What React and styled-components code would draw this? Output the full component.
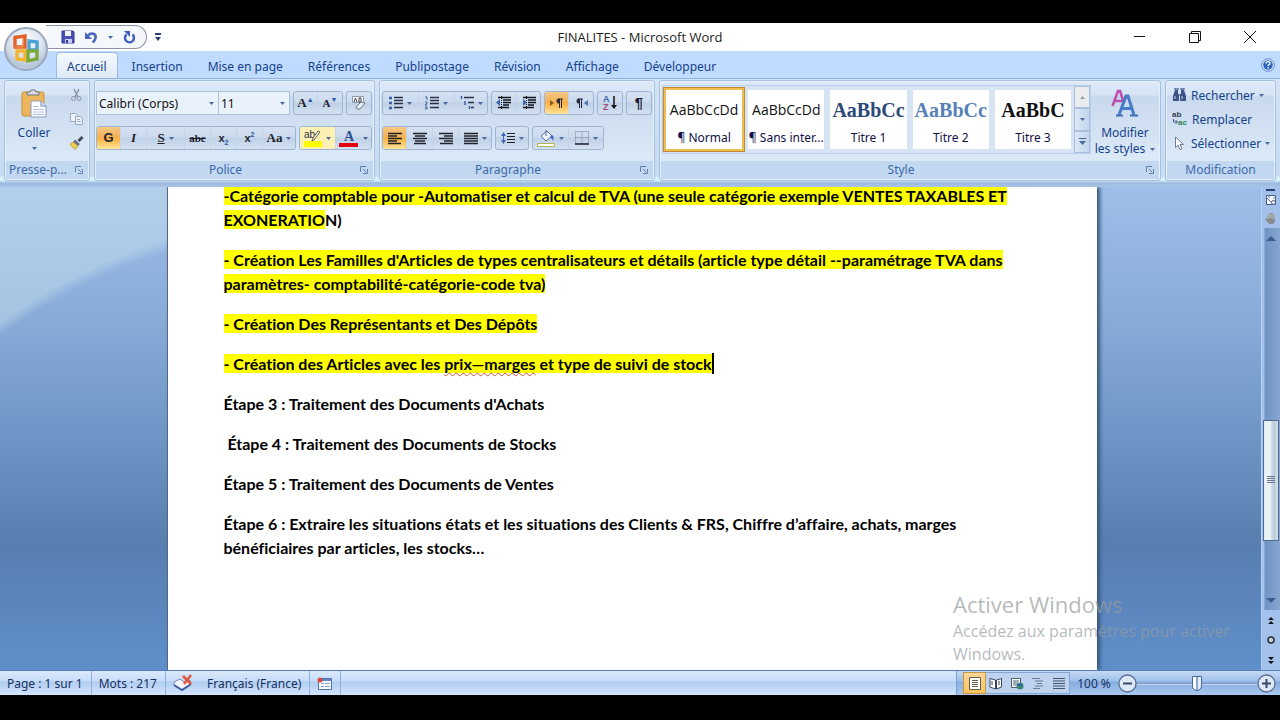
import React from 'react';
import styled, { createGlobalStyle, css } from 'styled-components';

const GlobalStyle = createGlobalStyle`
    * {
        box-sizing: border-box;
    }

    body {
        margin: 0;
        background: #000;
        font-family: "Noto Sans", "Open Sans", sans-serif;
        font-size: 12px;
        color: #15428b;
    }

    button, select, input {
        margin: 0;
        padding: 0;
        border: 0;
        background: none;
        font: inherit;
        color: inherit;
    }

    svg {
        display: block;
        flex: none;
    }
`;

// Window frame
const Window = styled.div`
    display: flex;
    flex-direction: column;
    height: 100vh;
    min-height: 480px;
    padding: 23px 0 25px;
    background: #000;
`;

const Header = styled.header`
    position: relative;
    background: #bfdbff;
`;

const TitleBar = styled.div`
    display: grid;
    grid-template-columns: 1fr auto 1fr;
    align-items: center;
    height: 28px;
    background: #fff;
`;

const Title = styled.h1`
    margin: 0;
    font-family: "Open Sans", sans-serif;
    font-size: 13px;
    font-weight: 400;
    color: #222;
`;

const OfficeButton = styled.button`
    position: absolute;
    left: 4px;
    top: 4px;
    width: 44px;
    height: 44px;
    display: grid;
    place-items: center;
    border: 2px solid #9aa8bd;
    border-radius: 50%;
    background: radial-gradient(circle at 50% 30%, #fff 0, #dde5f0 45%, #b6c5db 75%, #eef4fc 100%);
`;

const QuickAccess = styled.div`
    display: flex;
    align-items: center;
    gap: 8px;
`;

const QuickPill = styled.div`
    display: flex;
    align-items: center;
    gap: 10px;
    width: 101px;
    height: 24px;
    margin-left: 46px;
    padding-left: 15px;
    border: 1px solid #8a93a3;
    border-left: 0;
    border-radius: 0 12px 12px 0;
    background: #f4f7fc;
`;

const PlainButton = styled.button`
    display: grid;
    place-items: center;
`;

const WindowButtons = styled.div`
    display: flex;
    justify-content: flex-end;
    padding-right: 3px;
`;

const WindowButton = styled(PlainButton)`
    width: 55px;
    height: 26px;
`;

const Tabs = styled.nav`
    display: flex;
    align-items: flex-end;
    gap: 3px;
    height: 28px;
    padding: 0 5px 0 56px;
    border-bottom: 1px solid #8db2e3;
`;

const Tab = styled.button`
    height: 26px;
    padding: 2px 10px 0;
    border: 1px solid transparent;
    border-bottom: 0;
    border-radius: 4px 4px 0 0;
    white-space: nowrap;

    ${({ $active }) => $active && css`
        border-color: #9abce8;
        background: linear-gradient(#f4f9ff, #dfeaf7);
    `}
`;

const HelpButton = styled(PlainButton)`
    align-self: center;
    margin-left: auto;
`;

// Ribbon
const RibbonBar = styled.div`
    display: flex;
    gap: 4px;
    height: 108px;
    padding: 1px 4px 6px;
    background: linear-gradient(#d4e4f7 0, #c6daf1 95px, #d9fbff 101px, #9db9df 104px, #a9c4e8 108px);
`;

const GroupBox = styled.section`
    display: flex;
    flex-direction: column;
    flex: ${({ $grow }) => ($grow ? '1 1 0' : 'none')};
    min-width: 0;
    border: 1px solid #a5c0e0;
    border-radius: 3px;
    background: linear-gradient(#dfeafa 0, #d5e3f3 14px, #c9d9ed 15px, #dceaf8 82px);
    box-shadow: inset 0 0 0 1px #e6f0fb;
`;

const GroupBody = styled.div`
    flex: 1;
    display: flex;
    flex-direction: ${({ $column }) => ($column ? 'column' : 'row')};
    gap: ${({ $gap }) => $gap || 0}px;
    padding: ${({ $padding }) => $padding || '0'};
    min-height: 0;
`;

const GroupFooter = styled.div`
    display: flex;
    align-items: center;
    height: 18px;
    margin: 0 1px 1px;
    background: #c1d8f0;
`;

const GroupName = styled.h2`
    flex: 1;
    margin: 0;
    font-size: 12px;
    font-weight: 400;
    line-height: 18px;
    text-align: center;
    white-space: nowrap;
    color: #3e6aaa;
`;

const Launcher = styled(PlainButton)`
    width: 18px;
    height: 18px;
`;

const Row = styled.div`
    display: flex;
    gap: ${({ $gap }) => $gap || 0}px;
    min-width: 0;
`;

const ButtonSet = styled.div`
    display: flex;
    height: 24px;
    border: 1px solid #9db5d5;
    border-radius: 3px;
    background: linear-gradient(#d6e2f2 0, #cbdaee 10px, #bfd0e7 11px, #d3e1f1 22px);
    overflow: hidden;
`;

const Tool = styled.button`
    display: flex;
    align-items: center;
    justify-content: center;
    gap: 4px;
    width: ${({ $w }) => $w || 26}px;
    border-right: 1px solid #c3d3e8;
    color: #1e1e2c;

    &:last-child {
        border-right: 0;
    }

    ${({ $on }) => $on && css`
        background: linear-gradient(#f7c884 0, #f5b157 10px, #fbb040 11px, #fee59a 22px);
    `}
`;

const Glyph = styled.span`
    font-family: ${({ $sans }) => ($sans ? '"Liberation Sans", sans-serif' : '"Liberation Serif", serif')};
    font-size: ${({ $size }) => $size || 13}px;
    font-weight: 700;
    font-style: ${({ $italic }) => ($italic ? 'italic' : 'normal')};
    text-decoration: ${({ $line }) => $line || 'none'};
    line-height: 16px;

    sup, sub {
        font-size: 7px;
        line-height: 0;
        color: #2a55a8;
    }
`;

const Combo = styled.div`
    display: grid;
    align-items: center;
    width: ${({ $w }) => $w}px;
    height: 24px;
    border: 1px solid #a9c0dd;
    background: #e9f1fb;

    & + & {
        border-left: 0;
    }

    > * {
        grid-area: 1 / 1;
    }

    svg {
        justify-self: end;
        margin-right: 4px;
        pointer-events: none;
    }
`;

const Select = styled.select`
    appearance: none;
    width: 100%;
    height: 22px;
    padding: 0 2px;
    color: #111;
`;

const PasteButton = styled.button`
    display: flex;
    flex-direction: column;
    align-items: center;
    justify-content: flex-start;
    width: 58px;
    padding-top: 8px;
    gap: 6px;
`;

const ClipTools = styled.div`
    display: flex;
    flex-direction: column;
    align-items: center;
    gap: 10px;
    padding-top: 7px;
    flex: 1;
`;

const Gallery = styled.div`
    display: flex;
    flex: 1;
    height: 69px;
    min-width: 0;
    border: 1px solid #b9d0ec;
    background: #d6e4f4;
`;

const Styles = styled.div`
    display: flex;
    flex: 1;
    min-width: 0;
    padding-top: 1px;
    overflow: hidden;
`;

const StyleCell = styled.button`
    flex: 1 1 0;
    display: flex;
    flex-direction: column;
    justify-content: space-between;
    min-width: 0;
    height: 65px;
    padding: 4px 0 3px;
    border: 3px solid ${({ $on }) => ($on ? '#f0bd50' : '#d6e4f4')};
    background: #fff;
    color: #10104a;
    ${({ $on }) => $on && 'outline: 1px solid #c28a30; outline-offset: -1px;'}

    span {
        width: 100%;
        text-align: center;
        white-space: nowrap;
    }
`;

const Sample = styled.span`
    height: 32px;
    font-family: ${({ $serif }) => ($serif ? '"Liberation Serif", serif' : '"Open Sans", sans-serif')};
    font-size: ${({ $serif }) => ($serif ? 20 : 14)}px;
    font-weight: ${({ $serif }) => ($serif ? 700 : 400)};
    line-height: 32px;
    color: ${({ $color }) => $color || '#111'};
`;

const GalleryScroll = styled.div`
    display: flex;
    flex-direction: column;
    width: 16px;

    button {
        flex: 1;
        border: 1px solid #a9c0dd;
        background: linear-gradient(90deg, #dce8f6, #c3d5ec);
    }

    button:first-child {
        background: #eaecee;
    }
`;

const ChangeStyles = styled.button`
    display: flex;
    flex-direction: column;
    align-items: center;
    justify-content: flex-start;
    gap: 8px;
    width: 68px;
    padding-top: 4px;
    line-height: 16px;
    white-space: nowrap;
`;

const InlineLabel = styled.span`
    display: inline-flex;
    align-items: center;
    gap: 5px;
`;

const EditButton = styled.button`
    display: flex;
    align-items: center;
    gap: 4px;
    height: 24px;
    white-space: nowrap;
`;

// Document area
const Workspace = styled.main`
    flex: 1;
    display: flex;
    min-height: 0;
    background:
        radial-gradient(circle at 330px 590px, transparent 550px, rgba(196, 222, 238, .5) 562px) 0 0 / 168px 200px no-repeat,
        linear-gradient(#9fbfe8 0, #86a9d6 30%, #6d95c5 52%, #587eb0 74%, #5f8fca 100%);
`;

const Desk = styled.div`
    position: relative;
    flex: 1;
    display: flex;
    justify-content: center;
    min-width: 0;
    padding-left: 2px;
    overflow: hidden;
`;

const Paper = styled.article`
    width: 100%;
    max-width: 930px;
    padding: 0 56px;
    background: #fff;
    border-left: 1px solid #55687f;
    box-shadow: 3px 0 4px #34567f;
    font-family: Lato, sans-serif;
    font-size: 16px;
    font-weight: 700;
    font-variant-ligatures: none;
    line-height: 24px;
    color: #000;
    overflow: hidden;

    p {
        margin: 0 0 16px;
    }

    p:first-child {
        margin-top: -3px;
    }
`;

const Mark = styled.mark`
    background: #ff0;
    color: inherit;
`;

const Misspelt = styled.span`
    text-decoration: underline wavy #d0502a 1px;
    text-underline-offset: 2px;
    text-decoration-skip-ink: none;
`;

const Caret = styled.span`
    border-left: 2px solid #000;
    padding: 1px 0;
`;

const Activation = styled.aside`
    position: absolute;
    right: 24px;
    bottom: 4px;
    width: 284px;
    color: rgba(150, 155, 160, .7);
    font-family: "Open Sans", sans-serif;
    font-size: 16px;
    line-height: 23px;
    pointer-events: none;

    strong {
        display: block;
        font-size: 22px;
        font-weight: 400;
        line-height: 32px;
    }
`;

const ScrollColumn = styled.div`
    display: flex;
    flex-direction: column;
    align-items: stretch;
    width: 19px;
    border-left: 1px solid #b5d2f7;
    background: #a3c1ea;
`;

const ScrollTrack = styled.div`
    flex: 1;
    display: flex;
    flex-direction: column;
    padding: 0 1px;
    background: linear-gradient(90deg, #a3c1ea 2px, #6f93c3 3px, #87a6d0);
`;

const ScrollButton = styled(PlainButton)`
    height: ${({ $h }) => $h || 20}px;
`;

const Spacer = styled.div`
    flex: ${({ $flex }) => $flex};
`;

const Thumb = styled.div`
    flex: 120;
    display: grid;
    place-items: center;
    border: 1px solid #52698d;
    background: linear-gradient(90deg, #e6eef5 0, #eef4f8 40%, #b8c9db 70%, #d5e0ea 100%);
`;

// Status bar
const StatusBar = styled.footer`
    display: flex;
    height: 25px;
    border-top: 1px solid #567db1;
    background: linear-gradient(#dbe9fb 0, #c7dcf7 10px, #b0cdf2 11px, #d3e5fb 24px);
    white-space: nowrap;
`;

const StatusItem = styled.div`
    display: flex;
    align-items: center;
    gap: 14px;
    padding: 0 8px 0 7px;
    border-right: 1px solid #8fb0dc;
    color: #17305f;
`;

const StatusRight = styled.div`
    display: flex;
    align-items: center;
    flex: none;
    width: 324px;
    margin-left: auto;
    padding: 0 4px 0 6px;
    border-left: 1px solid #7c9fd0;
    background: linear-gradient(#c5daf5 0, #a0c0ea 10px, #86ade0 11px, #aac8ef 24px);
    color: #17305f;
`;

const ViewSet = styled.div`
    display: flex;
    height: 22px;
    border: 1px solid #85a5d2;
    background: #bdd3ef;
`;

const ViewButton = styled(PlainButton)`
    width: 21px;
    ${({ $on }) => $on && 'background: linear-gradient(#fbd79a, #fdc25c); outline: 1px solid #c59847;'}
`;

const ZoomValue = styled.button`
    width: 48px;
`;

const ZoomRange = styled.input`
    appearance: none;
    flex: 1;
    min-width: 0;
    height: 18px;
    background: linear-gradient(#5d80b4, #e5f0fd) 0 9px / 100% 2px no-repeat;

    &::-webkit-slider-thumb {
        appearance: none;
        width: 10px;
        height: 15px;
        border: 1px solid #47669a;
        border-radius: 1px 1px 5px 5px;
        background: linear-gradient(90deg, #fff 3px, #8aa5cd 3px, #8aa5cd 5px, #e3edfa 5px);
    }
`;

const Arrow = ({ color = '#4b6a9b' }) => (
    <svg width="5" height="3" viewBox="0 0 5 3"><path d="M0 0h5L2.500 3z" fill={color} /></svg>
);

const Icon = ({ w = 16, h = 16, children, ...rest }) => (
    <svg width={w} height={h} viewBox={`0 0 ${w} ${h}`} fill="none" {...rest}>{children}</svg>
);

const OfficeLogo = () => (
    <Icon w={30} h={30} strokeWidth="3.4">
        <path d="M4 3.500 14 2v11H4z" stroke="#e2622b" />
        <path d="m18 7 8 1v8h-8z" stroke="#49a3d8" />
        <path d="M6 17h8v9l-8-1z" stroke="#f4b531" />
        <path d="M17 17h9v8l-9 2z" stroke="#79a83b" />
        <path d="M12 4v9H4" stroke="#f08a4a" strokeWidth="1.400" />
    </Icon>
);

const SaveIcon = () => (
    <Icon w={14} h={14}>
        <path d="M1 1h11l1 1v11H1z" fill="#4a50b4" stroke="#303690" />
        <path d="M4 1h6v5H4z" fill="#eef1fb" />
        <path d="M4 9h7v4H4z" fill="#c9cff0" />
        <path d="M5 10h2v3H5z" fill="#303690" />
    </Icon>
);

const UndoIcon = () => (
    <Icon w={13} h={13}>
        <path d="M3 4.500C6 1 11.500 2.500 10.500 7c-.3 2-1.500 3.500-3 4.500" stroke="#4c66c0" strokeWidth="2.600" />
        <path d="M0 1v7h7z" fill="#4c66c0" />
    </Icon>
);

const RedoIcon = () => (
    <Icon w={13} h={13}>
        <path d="M9.500 3.500a4.500 4.500 0 1 1-6 0" stroke="#3f5fbd" strokeWidth="2.400" />
        <path d="M1 0h6v6z" fill="#3f5fbd" />
    </Icon>
);

const PasteIcon = () => (
    <Icon w={26} h={29}>
        <rect x="1" y="3" width="22" height="24" rx="2" fill="#edb65c" stroke="#c78e3a" />
        <path d="M6 6V3h3l1-2h4l1 2h3v3z" fill="#d8dce3" stroke="#6d7480" />
        <path d="M10 12h10l5 5v11H10z" fill="#fff" stroke="#8a9cc0" />
        <path d="M20 12v5h5" fill="#dfe6f5" stroke="#6f86b8" />
        <path d="M12 17.500h6m-6 3h11m-11 2.500h11m-11 2.500h11" stroke="#b4bfe0" />
    </Icon>
);

const CutIcon = () => (
    <Icon w={13} h={14} stroke="#8995aa">
        <path d="M4 1l4 8M9 1 5 9" strokeWidth="1.500" />
        <circle cx="3.500" cy="10.500" r="2" /><circle cx="9" cy="10.500" r="2" />
    </Icon>
);

const CopyIcon = () => (
    <Icon w={15} h={14} stroke="#9aa9c2">
        <path d="M1.500 1.500h5l2 2v6h-7z" fill="#edf2f8" />
        <path d="M6.500 4.500h5l2 2v6h-7z" fill="#edf2f8" />
        <path d="M8 7.500h3m-3 2h4" />
    </Icon>
);

const BrushIcon = () => (
    <Icon w={15} h={14}>
        <path d="m13.500 1-4 4" stroke="#434a58" strokeWidth="3" />
        <path d="M6 3.500 11 8l-2 2-5-4z" fill="#65718a" />
        <path d="M4 6 9 10l-3 3.500L1 8.500z" fill="#f1cf50" stroke="#b58c25" strokeWidth=".7" />
    </Icon>
);

const LauncherIcon = () => (
    <Icon w={8} h={8} stroke="#6380ad">
        <path d="M.5 6V.5H6M3 3l3 3" /><path d="M7.500 3v4.500H3" />
    </Icon>
);

const EraseIcon = () => (
    <Icon w={16} h={16}>
        <path d="M1.500 1.500h11v6h-11z" fill="#fff" stroke="#8d99ac" />
        <path d="m3 7 1.500-4L6 7M8 3v4h2V3z" stroke="#353b48" />
        <path d="m5 12 5-5 4 1-5 6H6z" fill="#eef1f6" stroke="#6b7689" />
    </Icon>
);

const HighlightIcon = () => (
    <Icon w={18} h={18}>
        <path d="M0 12h18v6H0z" fill="#ff0" />
        <text x="0" y="9" fontSize="10" fontFamily="Liberation Sans, sans-serif" fill="#26304a">ab</text>
        <path d="m16 3-6 8-2 1 1-3 5-7z" fill="#f3f1dc" stroke="#6b6d50" />
    </Icon>
);

const FontColorIcon = () => (
    <Icon w={20} h={18}>
        <text x="5" y="12" fontSize="14" fontWeight="700" fontFamily="Liberation Serif, serif" fill="#2c4e96">A</text>
        <path d="M0 14h19v4H0z" fill="#e3000f" />
    </Icon>
);

const ListIcon = ({ kind }) => (
    <Icon w={14} h={14}>
        {kind === 'bullet' && <path d="M0 2h3M0 7h3M0 12h3" stroke="#3c5ea6" strokeWidth="2.500" />}
        {kind === 'number' && <path d="M0 1h2v3M0 6h2v1L0 9h2m-2 2h2v2H0" stroke="#3c5ea6" />}
        {kind === 'multi' && <path d="M1.500 0v3M5 5v4M9.500 10v3" stroke="#3c5ea6" strokeWidth="1.500" />}
        <path
            d={kind === 'multi' ? 'M4 1.500h10M8 6.500h6M11 11.500h3' : 'M5 1.500h9M5 4.500h9M5 7.500h9M5 11.500h9'}
            stroke="#2a3345"
            strokeWidth="1.300"
        />
    </Icon>
);

const IndentIcon = ({ right }) => (
    <Icon w={15} h={14}>
        <path d="M2 1.500h13M7 4h8M7 6.500h8M7 9h6M2 11.500h11" stroke="#10151f" strokeWidth="1.500" />
        <path d={right ? 'M6 6.500 2 3v7z' : 'M0 6.500 4 3v7z'} fill="#3f62ae" />
        <path d="M5.500 0v14" stroke="#111" strokeDasharray="1 1" />
    </Icon>
);

const DirectionIcon = ({ rtl }) => (
    <Icon w={13} h={12}>
        <path d={rtl ? 'M13 3v6L9 6z' : 'M0 3v6l4-3z'} fill={rtl ? '#4c6fb5' : '#8b5a28'} />
        <g transform={rtl ? 'translate(0)' : 'translate(5)'}>
            <path d="M4.500 11V2M6.500 11V2M8 2H3" stroke="#222a3b" />
            <path d="M4 1.500a2.500 2.500 0 1 0 0 5z" fill="#222a3b" />
        </g>
    </Icon>
);

const SortIcon = () => (
    <Icon w={15} h={18}>
        <text x="0" y="8" fontSize="9" fontWeight="700" fontFamily="Liberation Sans, sans-serif" fill="#3b68b8">A</text>
        <text x="0" y="16" fontSize="9" fontWeight="700" fontFamily="Liberation Sans, sans-serif" fill="#a14874">Z</text>
        <path d="M11 2v11" stroke="#111" strokeWidth="1.500" /><path d="M8 11h6l-3 4z" fill="#111" />
    </Icon>
);

const alignPaths = {
    left: 'M0 1.500h14M0 4h9M0 6.500h14M0 9h9M0 11.500h13',
    center: 'M0 1.500h14M2 4h10M0 6.500h14M2 9h10M1 11.500h12',
    right: 'M0 1.500h14M5 4h9M0 6.500h14M5 9h9M1 11.500h13',
    justify: 'M0 1.500h14M0 4h14M0 6.500h14M0 9h14M0 11.500h14',
};

const AlignIcon = ({ kind }) => (
    <Icon w={14} h={13}><path d={alignPaths[kind]} stroke="#20222a" strokeWidth="1.500" /></Icon>
);

const SpacingIcon = () => (
    <Icon w={14} h={14}>
        <path d="M0 5h5L2.500 1zM0 9h5l-2.500 4z" fill="#4064ad" /><path d="M2.500 4v6" stroke="#4064ad" />
        <path d="M6 2.500h8M6 5.500h8M6 8.500h8M6 11.500h8" stroke="#20222a" />
    </Icon>
);

const FillIcon = () => (
    <Icon w={18} h={18}>
        <path d="m4 7 6-5 5 5-6 5z" fill="#edf2fb" stroke="#5a6e96" /><path d="M9 1v6" stroke="#5a6e96" />
        <path d="M14 6c3 0 3 3 2 6-1-3-2-3-3-3z" fill="#3f67b6" />
        <path d="M.5 14.500h17v3H.5z" fill="#fffef0" stroke="#b5b25c" />
    </Icon>
);

const BorderIcon = () => (
    <Icon w={14} h={14}>
        <path d="M.5.5h13v12H.5zM7 .5v12M.5 6.500h13" stroke="#76839a" strokeDasharray="1 1" />
        <path d="M0 13h14" stroke="#20222a" strokeWidth="1.500" />
    </Icon>
);

const StylesIcon = () => (
    <Icon w={28} h={28}>
        <path d="M1.500 17 7 2h2l4 12M4 12h7" stroke="#ba4fb0" strokeWidth="2.600" />
        <path d="m8 26 7-19h2l6 19M11 19.500h10" stroke="#487cc6" strokeWidth="3" />
        <path d="M5 26.500h7m7 0h8" stroke="#3c6eb6" strokeWidth="2" />
    </Icon>
);

const BinocularsIcon = () => (
    <Icon w={15} h={14}>
        <path d="M3 2h3v3l1 2v6H1V8zM9 2h3l2 6v5H8V7l1-2z" fill="#3d5488" />
        <path d="M6 7h3M3 0h3v2H3zm6 0h3v2H9z" stroke="#3d5488" /><path d="M3 8v3m7-3v3" stroke="#c4d2ea" />
    </Icon>
);

const ReplaceIcon = () => (
    <Icon w={16} h={18}>
        <text x="0" y="7" fontSize="8" fontWeight="700" fontFamily="Liberation Sans, sans-serif" fill="#333c4f">ab</text>
        <text x="6" y="15" fontSize="8" fontWeight="700" fontFamily="Liberation Sans, sans-serif" fill="#2b8255">ac</text>
        <path d="M1.500 9v3H5M3.500 10l2 2-2 2" stroke="#3f5b94" />
    </Icon>
);

const PointerIcon = () => (
    <Icon w={15} h={14}>
        <path d="M3.500 1v10.500L6 9l2 4.500 2-1L8 8.500h3.500z" fill="#fff" stroke="#6c7b94" />
    </Icon>
);

const HelpIcon = () => (
    <Icon w={14} h={14}>
        <circle cx="7" cy="7" r="6.300" fill="#e8f1fd" stroke="#5a86cc" />
        <circle cx="7" cy="7" r="4.800" fill="#2f66bd" />
        <path d="M5 5.500C5 3 9.500 3 9 5.500c-.3 1-2 1.200-2 2.500m0 1v1.500" stroke="#fff" strokeWidth="1.400" />
    </Icon>
);

const RulerIcon = () => (
    <Icon w={12} h={17}>
        <path d="M1 1h9" stroke="#29436f" strokeWidth="2" />
        <path d="M1.500 6.500h9v9h-9z" fill="#f4f7fd" stroke="#4a5a8a" />
        <path d="m1 8 8 8M4 6v3M8 9h3" stroke="#6676a6" /><circle cx="8.500" cy="13.500" r="2" fill="#fff" stroke="#4a5a8a" />
    </Icon>
);

const HandIcon = () => (
    <Icon w={12} h={12}>
        <path d="M3 7V3m2 3V1m2 5V1m2 6V3" stroke="#757981" strokeWidth="1.800" />
        <path d="M2 6h8v3l-2 3H4L0 7z" fill="#8a8c90" />
        <path d="M3 7V3m2 3V1.500m2 5v-5M9 7V3" stroke="#e6e3df" strokeWidth=".8" />
    </Icon>
);

const ProofIcon = () => (
    <Icon w={20} h={18}>
        <path d="m1 8 6-3 4 3 6-2v5l-8 5-8-5z" fill="#f5f8fe" stroke="#6c85b4" />
        <path d="m1 11 8 5 9-6" stroke="#3c5da0" strokeWidth="2" />
        <path d="m10 2 8 8m0-9-7 9" stroke="#e2573a" strokeWidth="2.500" />
    </Icon>
);

const MacroIcon = () => (
    <Icon w={15} h={13}>
        <path d="M1.500 1.500h13v11h-13z" fill="#f7faff" stroke="#506eaa" /><path d="M2 2h12v2H2z" fill="#6288c8" />
        <path d="M4 6.500h3m1 0h5M4 9.500h3m1 0h5" stroke="#8ca1ca" /><circle cx="3" cy="3" r="2.500" fill="#d9493b" />
    </Icon>
);

const ViewIcon = ({ kind }) => (
    <Icon w={14} h={13}>
        {kind === 'Page' && <path d="M1.500.5h11v12h-11zM4 3.500h6m-6 2h6m-6 2h6m-6 2h6" fill="#fff" stroke="#665d4b" />}
        {kind === 'Lecture' && (
            <path d="M1 1.500 6.500 3v9L1 10zM12.500 1.500 7.500 3v9l5-2zM3 4v4m7-4v4" fill="#fff" stroke="#39445a" />
        )}
        {kind === 'Web' && (
            <>
                <path d="M1.500 1.500h9v9h-9zM3 4h6M3 6h5M3 8h4" fill="#fff" stroke="#4c5a72" />
                <circle cx="10" cy="9" r="3.500" fill="#3a8a72" /><path d="M8 8h4" stroke="#315fae" strokeWidth="2" />
            </>
        )}
        {kind === 'Plan' && <path d="M1 1.500h8M4 4h8M6 6.500h5M4 9h8M2 11.500h7" stroke="#6d7c94" strokeWidth="1.200" />}
        {kind === 'Brouillon' && <path d="M1 1.500h12M1 4h12M1 6.500h12M1 9h12M1 11.500h12" stroke="#45546c" strokeWidth="1.200" />}
    </Icon>
);

const RoundIcon = ({ plus }) => (
    <Icon w={19} h={19}>
        <circle cx="9.500" cy="9.500" r="8.500" fill="#dce8f8" stroke="#5c7095" strokeWidth="1.300" />
        <path d={plus ? 'M5 9.500h9M9.500 5v9' : 'M5 9.500h9'} stroke="#3b4a66" strokeWidth="2" />
    </Icon>
);

const tabs = ['Accueil', 'Insertion', 'Mise en page', 'Références', 'Publipostage', 'Révision', 'Affichage', 'Développeur'];

const styles = [
    { name: '¶ Normal', sample: 'AaBbCcDd' },
    { name: '¶ Sans inter...', sample: 'AaBbCcDd' },
    { name: 'Titre 1', sample: 'AaBbCc', serif: true, color: '#2c4a78' },
    { name: 'Titre 2', sample: 'AaBbCc', serif: true, color: '#5580b8' },
    { name: 'Titre 3', sample: 'AaBbC', serif: true },
];

const views = ['Page', 'Lecture', 'Web', 'Plan', 'Brouillon'];

function Group({ name, width, grow, launcher, children }) {
    return (
        <GroupBox $grow={grow} style={width ? { width } : undefined}>
            {children}
            <GroupFooter>
                <GroupName>{name}</GroupName>
                {launcher && <Launcher aria-label={`Options ${name}`}><LauncherIcon /></Launcher>}
            </GroupFooter>
        </GroupBox>
    );
}

function Ribbon() {
    return (
        <RibbonBar>
            <Group name="Presse-p..." width={86} launcher>
                <GroupBody>
                    <PasteButton>
                        <PasteIcon />
                        Coller
                        <Arrow />
                    </PasteButton>
                    <ClipTools>
                        <PlainButton aria-label="Couper"><CutIcon /></PlainButton>
                        <PlainButton aria-label="Copier"><CopyIcon /></PlainButton>
                        <PlainButton aria-label="Reproduire la mise en forme"><BrushIcon /></PlainButton>
                    </ClipTools>
                </GroupBody>
            </Group>

            <Group name="Police" width={281} launcher>
                <GroupBody $column $gap={11} $padding="10px 1px 0">
                    <Row $gap={3}>
                        <Row>
                            <Combo $w={123}>
                                <Select aria-label="Police"><option>Calibri (Corps)</option></Select>
                                <Arrow />
                            </Combo>
                            <Combo $w={71}>
                                <Select aria-label="Taille de police"><option>11</option></Select>
                                <Arrow />
                            </Combo>
                        </Row>
                        <ButtonSet>
                            <Tool $w={24} aria-label="Agrandir la police"><Glyph>A<sup>▲</sup></Glyph></Tool>
                            <Tool $w={24} aria-label="Réduire la police"><Glyph $size={11}>A<sup>▼</sup></Glyph></Tool>
                        </ButtonSet>
                        <ButtonSet>
                            <Tool $w={24} aria-label="Effacer la mise en forme"><EraseIcon /></Tool>
                        </ButtonSet>
                    </Row>
                    <Row $gap={3}>
                        <ButtonSet>
                            <Tool $w={24} $on><Glyph $sans>G</Glyph></Tool>
                            <Tool><Glyph $italic>I</Glyph></Tool>
                            <Tool $w={38}><Glyph $line="underline">S</Glyph><Arrow /></Tool>
                            <Tool><Glyph $line="line-through" $size={11}>abc</Glyph></Tool>
                            <Tool><Glyph $sans $size={11}>x<sub>2</sub></Glyph></Tool>
                            <Tool><Glyph $sans $size={11}>x<sup>2</sup></Glyph></Tool>
                            <Tool $w={32}><Glyph>Aa</Glyph><Arrow /></Tool>
                        </ButtonSet>
                        <ButtonSet>
                            <Tool $w={36} aria-label="Couleur de surbrillance" style={{ background: '#fdf0b4' }}>
                                <HighlightIcon /><Arrow />
                            </Tool>
                            <Tool $w={35} aria-label="Couleur de police"><FontColorIcon /><Arrow /></Tool>
                        </ButtonSet>
                    </Row>
                </GroupBody>
            </Group>

            <Group name="Paragraphe" width={276} launcher>
                <GroupBody $column $gap={11} $padding="10px 2px 0">
                    <Row $gap={3}>
                        <ButtonSet>
                            <Tool $w={36} aria-label="Puces"><ListIcon kind="bullet" /><Arrow /></Tool>
                            <Tool $w={36} aria-label="Numérotation"><ListIcon kind="number" /><Arrow /></Tool>
                            <Tool $w={32} aria-label="Liste à plusieurs niveaux"><ListIcon kind="multi" /><Arrow /></Tool>
                        </ButtonSet>
                        <ButtonSet>
                            <Tool $w={24} aria-label="Diminuer le retrait"><IndentIcon /></Tool>
                            <Tool $w={24} aria-label="Augmenter le retrait"><IndentIcon right /></Tool>
                        </ButtonSet>
                        <ButtonSet>
                            <Tool $w={24} $on aria-label="De gauche à droite"><DirectionIcon /></Tool>
                            <Tool $w={24} aria-label="De droite à gauche"><DirectionIcon rtl /></Tool>
                        </ButtonSet>
                        <ButtonSet><Tool $w={24} aria-label="Trier"><SortIcon /></Tool></ButtonSet>
                        <ButtonSet><Tool $w={24}><Glyph $sans $size={15}>¶</Glyph></Tool></ButtonSet>
                    </Row>
                    <Row $gap={3}>
                        <ButtonSet>
                            <Tool $w={24} $on aria-label="Aligner à gauche"><AlignIcon kind="left" /></Tool>
                            <Tool aria-label="Centrer"><AlignIcon kind="center" /></Tool>
                            <Tool aria-label="Aligner à droite"><AlignIcon kind="right" /></Tool>
                            <Tool $w={32} aria-label="Justifier"><AlignIcon kind="justify" /><Arrow /></Tool>
                        </ButtonSet>
                        <ButtonSet>
                            <Tool $w={32} aria-label="Interligne"><SpacingIcon /><Arrow /></Tool>
                        </ButtonSet>
                        <ButtonSet>
                            <Tool $w={36} aria-label="Trame de fond"><FillIcon /><Arrow /></Tool>
                            <Tool $w={34} aria-label="Bordure"><BorderIcon /><Arrow /></Tool>
                        </ButtonSet>
                    </Row>
                </GroupBody>
            </Group>

            <Group name="Style" grow launcher>
                <GroupBody $padding="4px 1px 0 2px">
                    <Gallery>
                        <Styles>
                            {styles.map((item, index) => (
                                <StyleCell key={item.name} $on={index === 0}>
                                    <Sample $serif={item.serif} $color={item.color}>{item.sample}</Sample>
                                    <span>{item.name}</span>
                                </StyleCell>
                            ))}
                        </Styles>
                        <GalleryScroll>
                            <PlainButton aria-label="Styles précédents">
                                <Icon w={5} h={3}><path d="M0 3h5L2.500 0z" fill="#999fa9" /></Icon>
                            </PlainButton>
                            <PlainButton aria-label="Styles suivants"><Arrow /></PlainButton>
                            <PlainButton aria-label="Tous les styles">
                                <Icon w={7} h={7}><path d="M0 0h7v1H0zM0 3h7L3.500 7z" fill="#4b6a9b" /></Icon>
                            </PlainButton>
                        </GalleryScroll>
                    </Gallery>
                    <ChangeStyles>
                        <StylesIcon />
                        <span>Modifier<br /><InlineLabel>les styles <Arrow /></InlineLabel></span>
                    </ChangeStyles>
                </GroupBody>
            </Group>

            <Group name="Modification" width={111}>
                <GroupBody $column $padding="2px 0 0 6px">
                    <EditButton><BinocularsIcon />Rechercher<Arrow /></EditButton>
                    <EditButton><ReplaceIcon />Remplacer</EditButton>
                    <EditButton><PointerIcon />Sélectionner<Arrow /></EditButton>
                </GroupBody>
            </Group>
        </RibbonBar>
    );
}

function Document() {
    return (
        <Paper>
            <p>
                <Mark>
                    -Catégorie comptable pour -Automatiser et calcul de TVA (une seule catégorie exemple VENTES TAXABLES ET
                    EXONERATIO
                </Mark>
                N)
            </p>
            <p>
                <Mark>
                    - Création Les Familles d'Articles de types centralisateurs et détails (article type détail
                    --paramétrage TVA dans paramètres- comptabilité-catégorie-code tva)
                </Mark>
            </p>
            <p><Mark>- Création Des Représentants et Des Dépôts</Mark></p>
            <p>
                <Mark>
                    - Création des Articles avec les <Misspelt>prix—marges</Misspelt> et type de suivi de stock
                </Mark>
                <Caret />
            </p>
            <p>Étape 3 : Traitement des Documents d'Achats</p>
            <p>&nbsp;Étape 4 : Traitement des Documents de Stocks</p>
            <p>Étape 5 : Traitement des Documents de Ventes</p>
            <p>
                Étape 6 : Extraire les situations états et les situations des Clients &amp; FRS, Chiffre d’affaire,
                achats, marges bénéficiaires par articles, les stocks…
            </p>
        </Paper>
    );
}

function ScrollBar() {
    return (
        <ScrollColumn>
            <ScrollButton $h={21} aria-label="Règle"><RulerIcon /></ScrollButton>
            <ScrollButton aria-label="Main"><HandIcon /></ScrollButton>
            <ScrollTrack>
                <ScrollButton aria-label="Monter">
                    <Icon w={10} h={5}><path d="M0 5h10L5 0z" fill="#3b5b91" /></Icon>
                </ScrollButton>
                <Spacer $flex={174} />
                <Thumb><Icon w={8} h={8}><path d="M0 .5h8m-8 2h8m-8 2h8m-8 2h8" stroke="#66778e" /></Icon></Thumb>
                <Spacer $flex={50} />
                <ScrollButton aria-label="Descendre">
                    <Icon w={10} h={5}><path d="M0 0h10L5 5z" fill="#3b5b91" /></Icon>
                </ScrollButton>
            </ScrollTrack>
            <ScrollButton aria-label="Page précédente">
                <Icon w={6} h={7}><path d="M0 3h6L3 0zM0 7h6L3 4z" fill="#111" /></Icon>
            </ScrollButton>
            <ScrollButton aria-label="Sélectionner l'objet">
                <Icon w={8} h={8}><circle cx="4" cy="4" r="3" fill="#c9ccd0" stroke="#26303f" strokeWidth="1.500" /></Icon>
            </ScrollButton>
            <ScrollButton aria-label="Page suivante">
                <Icon w={6} h={7}><path d="M0 0h6L3 3zM0 4h6L3 7z" fill="#111" /></Icon>
            </ScrollButton>
        </ScrollColumn>
    );
}

function App() {
    return (
        <Window>
            <GlobalStyle />
            <Header>
                <TitleBar>
                    <QuickAccess>
                        <QuickPill>
                            <PlainButton aria-label="Enregistrer"><SaveIcon /></PlainButton>
                            <PlainButton aria-label="Annuler"><UndoIcon /></PlainButton>
                            <Arrow />
                            <PlainButton aria-label="Répéter"><RedoIcon /></PlainButton>
                        </QuickPill>
                        <PlainButton aria-label="Personnaliser la barre">
                            <Icon w={6} h={8}><path d="M0 0h6v2H0zM0 4h6L3 8z" fill="#293e68" /></Icon>
                        </PlainButton>
                    </QuickAccess>
                    <Title>FINALITES - Microsoft Word</Title>
                    <WindowButtons>
                        <WindowButton aria-label="Réduire"><Icon w={11} h={11}><path d="M0 4.500h11" stroke="#111" /></Icon></WindowButton>
                        <WindowButton aria-label="Restaurer">
                            <Icon w={12} h={12}><path d="M.5 2.500h9v9h-9zM2.500 2.500v-2h9v9h-2" stroke="#111" /></Icon>
                        </WindowButton>
                        <WindowButton aria-label="Fermer"><Icon w={12} h={12}><path d="m0 0 12 12M12 0 0 12" stroke="#111" /></Icon></WindowButton>
                    </WindowButtons>
                </TitleBar>
                <Tabs>
                    {tabs.map((tab, index) => <Tab key={tab} $active={index === 0}>{tab}</Tab>)}
                    <HelpButton aria-label="Aide"><HelpIcon /></HelpButton>
                </Tabs>
                <OfficeButton aria-label="Bouton Office"><OfficeLogo /></OfficeButton>
            </Header>
            <Ribbon />
            <Workspace>
                <Desk>
                    <Document />
                    <Activation>
                        <strong>Activer Windows</strong>
                        Accédez aux paramètres pour activer Windows.
                    </Activation>
                </Desk>
                <ScrollBar />
            </Workspace>
            <StatusBar>
                <StatusItem>Page : 1 sur 1</StatusItem>
                <StatusItem>Mots : 217</StatusItem>
                <StatusItem><ProofIcon />Français (France)</StatusItem>
                <StatusItem><MacroIcon /></StatusItem>
                <StatusRight>
                    <ViewSet>
                        {views.map((view, index) => (
                            <ViewButton key={view} $on={index === 0} aria-label={view}><ViewIcon kind={view} /></ViewButton>
                        ))}
                    </ViewSet>
                    <ZoomValue>100 %</ZoomValue>
                    <PlainButton aria-label="Zoom arrière"><RoundIcon /></PlainButton>
                    <ZoomRange type="range" aria-label="Zoom" min="0" max="100" defaultValue="50" />
                    <PlainButton aria-label="Zoom avant"><RoundIcon plus /></PlainButton>
                </StatusRight>
            </StatusBar>
        </Window>
    );
}

export default App;
